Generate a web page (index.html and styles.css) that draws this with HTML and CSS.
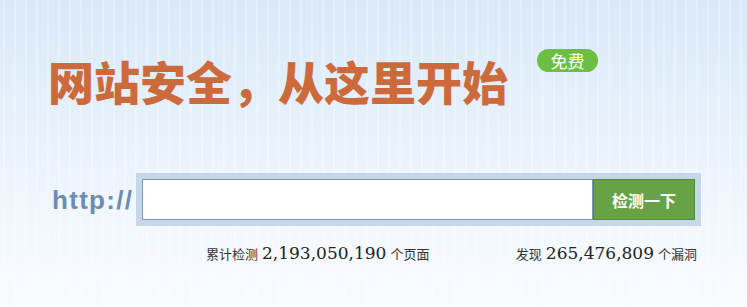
FILE: index.html
```html
<!DOCTYPE html>
<html lang="zh-CN">
<head>
<meta charset="utf-8">
<title>网站安全</title>
<link rel="stylesheet" href="styles.css">
</head>
<body>
<div class="page">
  <div class="hero">
    <h1 class="title">网站安全，从这里开始<span class="badge">免费</span></h1>
  </div>
  <div class="search-row">
    <span class="proto">http://</span>
    <div class="frame">
      <input class="url" type="text">
      <button class="go">检测一下</button>
    </div>
  </div>
  <div class="stats">
    <span class="stat">累计检测 <b class="num">2,193,050,190</b> 个页面</span>
    <span class="stat">发现 <b class="num">265,476,809</b> 个漏洞</span>
  </div>
</div>
</body>
</html>
```
FILE: styles.css
```css
html, body {
  margin: 0;
  padding: 0;
}
body {
  width: 747px;
  height: 307px;
  overflow: hidden;
  font-family: "Noto Sans CJK SC", "Noto Sans", sans-serif;
  background:
    repeating-linear-gradient(90deg, rgba(255,255,255,0) 0px, rgba(255,255,255,0) 3px, rgba(255,255,255,0.25) 3px, rgba(255,255,255,0.25) 5px, rgba(255,255,255,0) 5px, rgba(255,255,255,0) 11px),
    linear-gradient(180deg, #d9e9f9 0%, #e6f1fc 40%, #f3f8fd 75%, #f9fbfe 100%);
}
.page {
  padding: 0 0 0 48px;
}
.hero {
  padding-top: 49px;
  height: 72px;
}
.title {
  position: relative;
  display: inline-block;
  margin: 0;
  font-size: 46px;
  line-height: 62px;
  font-weight: 900;
  color: #cd6a3b;
  letter-spacing: 0;
}
.badge {
  position: absolute;
  left: 489px;
  top: 0;
  width: 61px;
  height: 23px;
  border-radius: 12px;
  background: #6cbe45;
  color: #fff;
  font-size: 17px;
  line-height: 23px;
  font-weight: 400;
  text-align: center;
}
.search-row {
  display: flex;
  align-items: center;
  margin-top: 52px;
}
.proto {
  width: 84px;
  padding-left: 4px;
  font-family: "Liberation Sans", Arial, sans-serif;
  font-weight: 700;
  font-size: 26px;
  letter-spacing: 1.3px;
  color: #6d8cb4;
  margin-top: 2px;
}
.frame {
  display: flex;
  padding: 6px;
  background: #c6d7eb;
}
.url {
  width: 451px;
  height: 41px;
  box-sizing: border-box;
  margin: 0;
  border: 1px solid #7e97b8;
  background: #fff;
  outline: none;
}
.go {
  width: 102px;
  height: 41px;
  box-sizing: border-box;
  margin: 0;
  border: 1px solid #4f8a35;
  background: #68a246;
  color: #fff;
  font-family: "Noto Sans CJK SC", sans-serif;
  font-weight: 700;
  font-size: 16px;
  padding: 0;
}
.stats {
  display: flex;
  justify-content: space-between;
  width: 491px;
  margin: 17px 0 0 158px;
  color: #333;
  font-size: 13px;
}
.stat {
  display: flex;
  align-items: baseline;
  gap: 4px;
}
.num {
  font-family: "DejaVu Serif", "Liberation Serif", serif;
  font-weight: 400;
  font-size: 17px;
  color: #222;
}
```
